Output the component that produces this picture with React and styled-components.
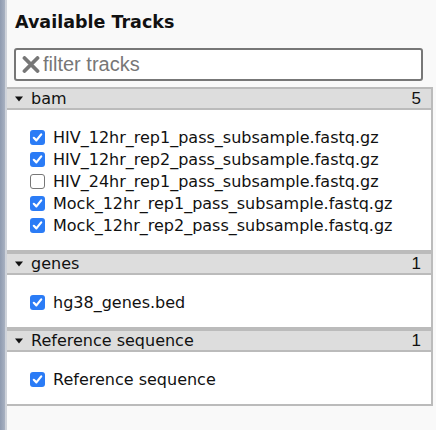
import styled, { createGlobalStyle } from "styled-components";

const GlobalStyle = createGlobalStyle`
  html, body {
    margin: 0;
    padding: 0;
    background: #f9f9f9;
  }
  #root {
    height: 100vh;
  }
`;

const Page = styled.div`
  display: flex;
  height: 100%;
  font-family: "DejaVu Sans", Verdana, sans-serif;
  color: #111;
`;

const Splitter = styled.div`
  width: 5px;
  flex: none;
  background: linear-gradient(to right, #8f9bb0, #a8b1c1);
  border-right: 2px solid #cfd3da;
`;

const Main = styled.div`
  flex: 1;
  display: flex;
  flex-direction: column;
  padding-right: 3px;
`;

const Title = styled.h2`
  margin: 0;
  padding: 12px 0 0 8px;
  height: 37px;
  box-sizing: border-box;
  font-size: 17.5px;
  font-weight: bold;
  line-height: 20px;
`;

const FilterBox = styled.label`
  display: flex;
  align-items: center;
  gap: 3px;
  margin: 11px 10px 6px 7px;
  height: 33px;
  box-sizing: border-box;
  padding: 0 6px;
  border: 2px solid #777;
  border-radius: 3px;
  background: #fff;
`;

const FilterInput = styled.input`
  flex: 1;
  border: none;
  outline: none;
  padding: 0;
  background: transparent;
  font-family: "Liberation Sans", Arial, sans-serif;
  font-size: 20px;
  color: #333;

  &::placeholder {
    color: #777;
  }
`;

const Panel = styled.div`
  background: #fff;
  border-right: 2px solid #bbb;
`;

const SectionHeader = styled.div`
  display: flex;
  align-items: center;
  height: 19px;
  padding: 0 10px 0 8px;
  background: #ddd;
  border-top: 2px solid #bbb;
  border-bottom: 2px solid #bbb;
  font-size: 16px;
`;

const HeaderLabel = styled.span`
  flex: 1;
  display: flex;
  align-items: center;
  gap: 8px;
`;

const Count = styled.span`
  font-family: "Liberation Sans", Arial, sans-serif;
  font-size: 17px;
`;

const TrackList = styled.div`
  display: flex;
  flex-direction: column;
  padding: 16px 0 14px 23px;
  border-bottom: 2px solid #bbb;
`;

const Track = styled.label`
  display: flex;
  align-items: center;
  gap: 8px;
  height: 22px;
  font-size: 16px;
  white-space: nowrap;
`;

const Box = styled.span`
  flex: none;
  width: 15px;
  height: 15px;
  box-sizing: border-box;
  border-radius: 3px;
  display: flex;
  align-items: center;
  justify-content: center;
  background: ${(p) => (p.$checked ? "#2b7cf6" : "#fff")};
  border: ${(p) => (p.$checked ? "none" : "1.5px solid #777")};
`;

const Triangle = () => (
  <svg width="8" height="6" viewBox="0 0 8 6">
    <path d="M0 0.5 L8 0.5 L4 5.5 Z" fill="#111" />
  </svg>
);

const ClearIcon = () => (
  <svg width="18" height="17" viewBox="0 0 18 17">
    <path
      d="M2.5 2 L15.5 15 M15.5 2 L2.5 15"
      stroke="#777"
      strokeWidth="3.8"
      strokeLinecap="round"
    />
  </svg>
);

const CheckBox = ({ checked }) => (
  <Box $checked={checked}>
    {checked && (
      <svg width="11" height="11" viewBox="0 0 11 11">
        <path
          d="M1.8 5.8 L4.4 8.4 L9.2 2.4"
          stroke="#fff"
          strokeWidth="2.2"
          fill="none"
          strokeLinecap="round"
          strokeLinejoin="round"
        />
      </svg>
    )}
  </Box>
);

const sections = [
  {
    name: "bam",
    tracks: [
      ["HIV_12hr_rep1_pass_subsample.fastq.gz", true],
      ["HIV_12hr_rep2_pass_subsample.fastq.gz", true],
      ["HIV_24hr_rep1_pass_subsample.fastq.gz", false],
      ["Mock_12hr_rep1_pass_subsample.fastq.gz", true],
      ["Mock_12hr_rep2_pass_subsample.fastq.gz", true],
    ],
  },
  { name: "genes", tracks: [["hg38_genes.bed", true]] },
  { name: "Reference sequence", tracks: [["Reference sequence", true]] },
];

const App = () => {
  return (
    <Page>
      <GlobalStyle />
      <Splitter />
      <Main>
        <Title>Available Tracks</Title>
        <FilterBox>
          <ClearIcon />
          <FilterInput placeholder="filter tracks" />
        </FilterBox>
        <Panel>
          {sections.map((s) => (
            <div key={s.name}>
              <SectionHeader>
                <HeaderLabel>
                  <Triangle />
                  {s.name}
                </HeaderLabel>
                <Count>{s.tracks.length}</Count>
              </SectionHeader>
              <TrackList>
                {s.tracks.map(([label, checked]) => (
                  <Track key={label}>
                    <CheckBox checked={checked} />
                    {label}
                  </Track>
                ))}
              </TrackList>
            </div>
          ))}
        </Panel>
      </Main>
    </Page>
  );
};

export default App;
